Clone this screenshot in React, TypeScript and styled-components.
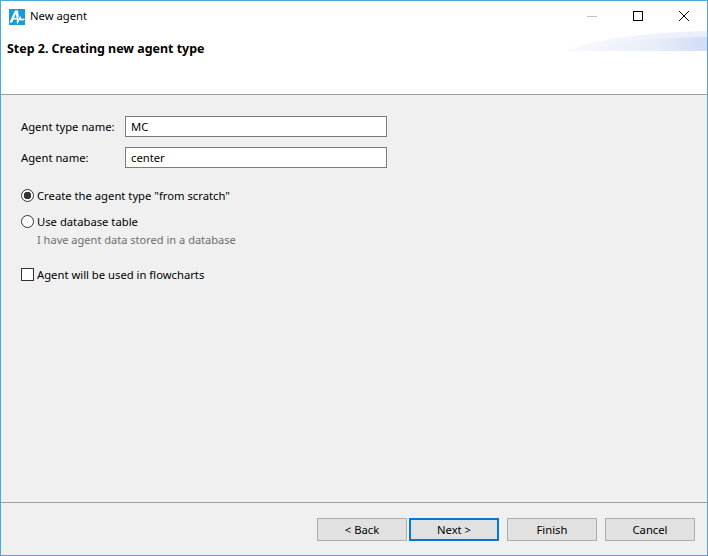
import styled, { createGlobalStyle } from "styled-components";

const GlobalStyle = createGlobalStyle`
    html, body {
        margin: 0;
        padding: 0;
        background: #ffffff;
    }
    * {
        box-sizing: border-box;
    }
`;

const App = () => {
    return (
        <Window>
            <GlobalStyle />
            <TitleBar>
                <AppIcon viewBox="0 0 16 16">
                    <rect width="16" height="16" fill="#1b9ad6" />
                    <path d="M0.5 13.5 L6 1.5 L9 1.5 L9.8 8 L7.6 8.5 L6.8 5 L3.2 13.5 Z" fill="#ffffff" />
                    <path
                        d="M4 9.8 L7.5 9.8 M8.3 8 L8.6 13 L11 8.5 L12 10.8 L15.5 10.2"
                        fill="none"
                        stroke="#ffffff"
                        strokeWidth="1.5"
                    />
                </AppIcon>
                <WindowTitle>New agent</WindowTitle>
                <WindowControls>
                    <ControlIcon viewBox="0 0 10 10">
                        <path d="M0 5.5 H10" stroke="#c4c4c4" strokeWidth="1" />
                    </ControlIcon>
                    <ControlIcon viewBox="0 0 10 10">
                        <rect x="0.5" y="0.5" width="9" height="9" fill="none" stroke="#000" strokeWidth="1" />
                    </ControlIcon>
                    <ControlIcon viewBox="0 0 10 10">
                        <path d="M0 0 L10 10 M10 0 L0 10" stroke="#000" strokeWidth="1" />
                    </ControlIcon>
                </WindowControls>
            </TitleBar>
            <Banner>
                <StepTitle>Step 2. Creating new agent type</StepTitle>
                <Swoosh viewBox="0 0 141 20" preserveAspectRatio="none">
                    <defs>
                        <linearGradient id="swooshLight" x1="0" x2="1" y1="0" y2="0">
                            <stop offset="0" stopColor="#f8f9fe" />
                            <stop offset="1" stopColor="#e9eefa" />
                        </linearGradient>
                        <linearGradient id="swooshDark" x1="0" x2="1" y1="0" y2="0">
                            <stop offset="0" stopColor="#f6f8fd" />
                            <stop offset="0.6" stopColor="#e8edf9" />
                            <stop offset="1" stopColor="#d3dcf6" />
                        </linearGradient>
                    </defs>
                    <path d="M0 20 C25 8 85 1 141 0 V20 Z" fill="url(#swooshLight)" />
                    <path d="M14 20 C45 10 95 6 141 6 V20 Z" fill="url(#swooshDark)" />
                </Swoosh>
            </Banner>
            <Body>
                <FieldGrid>
                    <FieldLabel>Agent type name:</FieldLabel>
                    <TextField>MC</TextField>
                    <FieldLabel>Agent name:</FieldLabel>
                    <TextField>center</TextField>
                </FieldGrid>
                <RadioGroup>
                    <OptionRow>
                        <RadioMark $checked />
                        <OptionText>Create the agent type "from scratch"</OptionText>
                    </OptionRow>
                    <OptionRow>
                        <RadioMark />
                        <OptionText>Use database table</OptionText>
                    </OptionRow>
                    <Hint>I have agent data stored in a database</Hint>
                </RadioGroup>
                <OptionRow>
                    <CheckMark />
                    <OptionText>Agent will be used in flowcharts</OptionText>
                </OptionRow>
            </Body>
            <Footer>
                <WizardButton>&lt; Back</WizardButton>
                <WizardButton $primary>Next &gt;</WizardButton>
                <WizardButton $spaced>Finish</WizardButton>
                <WizardButton $spaced>Cancel</WizardButton>
            </Footer>
        </Window>
    );
};

export default App;

const Window = styled.div`
    width: 708px;
    height: 556px;
    display: flex;
    flex-direction: column;
    border: 1px solid #4fa9d8;
    font-family: "Noto Sans", "Open Sans", sans-serif;
    font-size: 11.25px;
    color: #000000;
    background: #ffffff;
    overflow: hidden;
`;

const TitleBar = styled.div`
    height: 30px;
    flex: none;
    display: flex;
    align-items: center;
    padding-left: 8px;
`;

const AppIcon = styled.svg`
    width: 16px;
    height: 16px;
    margin-top: 1px;
`;

const WindowTitle = styled.span`
    margin-left: 5px;
    margin-bottom: 2px;
`;

const WindowControls = styled.div`
    margin-left: auto;
    display: flex;
    align-items: center;
    gap: 36px;
    padding-right: 18px;
`;

const ControlIcon = styled.svg`
    width: 10px;
    height: 10px;
`;

const Banner = styled.div`
    height: 64px;
    flex: none;
    position: relative;
    border-bottom: 1px solid #a0a0a0;
    padding: 9px 0 0 6px;
`;

const StepTitle = styled.div`
    font-size: 12.45px;
    font-weight: 700;
    line-height: 18px;
`;

const Swoosh = styled.svg`
    position: absolute;
    top: 0;
    right: 0;
    width: 141px;
    height: 20px;
`;

const Body = styled.div`
    flex: 1;
    background: #f0f0f0;
    padding: 21px 0 0 20px;
`;

const FieldGrid = styled.div`
    display: grid;
    grid-template-columns: 104px 262px;
    row-gap: 10px;
    align-items: center;
`;

const FieldLabel = styled.span``;

const TextField = styled.div`
    height: 21px;
    border: 1px solid #7a7a7a;
    background: #ffffff;
    padding-left: 5px;
    line-height: 19px;
`;

const RadioGroup = styled.div`
    margin-top: 19px;
    display: flex;
    flex-direction: column;
    gap: 10px;
`;

const OptionRow = styled.div`
    display: flex;
    align-items: center;
    gap: 3px;
    height: 16px;
`;

const RadioMark = styled.span<{ $checked?: boolean }>`
    width: 13px;
    height: 13px;
    border-radius: 50%;
    border: 1px solid #333333;
    background: ${(p) => (p.$checked ? "radial-gradient(circle, #333333 0 3.5px, #ffffff 4px)" : "#ffffff")};
`;

const CheckMark = styled.span`
    width: 13px;
    height: 13px;
    border: 1px solid #333333;
    background: #ffffff;
`;

const OptionText = styled.span``;

const Hint = styled.div`
    margin: -7px 0 18px 16px;
    height: 16px;
    line-height: 16px;
    font-size: 11.05px;
    color: #6d6d6d;
`;

const Footer = styled.div`
    height: 53px;
    flex: none;
    background: #f0f0f0;
    border-top: 1px solid #a0a0a0;
    display: flex;
    justify-content: flex-end;
    align-items: flex-start;
    padding: 15px 12px 0 0;
    gap: 2px;
`;

const WizardButton = styled.button<{ $primary?: boolean; $spaced?: boolean }>`
    width: 90px;
    height: 23px;
    padding: 0;
    margin-left: ${(p) => (p.$spaced ? "6px" : "0")};
    font-family: inherit;
    font-size: 11.25px;
    color: #000000;
    background: #e1e1e1;
    border: ${(p) => (p.$primary ? "2px solid #0078d7" : "1px solid #adadad")};
`;
